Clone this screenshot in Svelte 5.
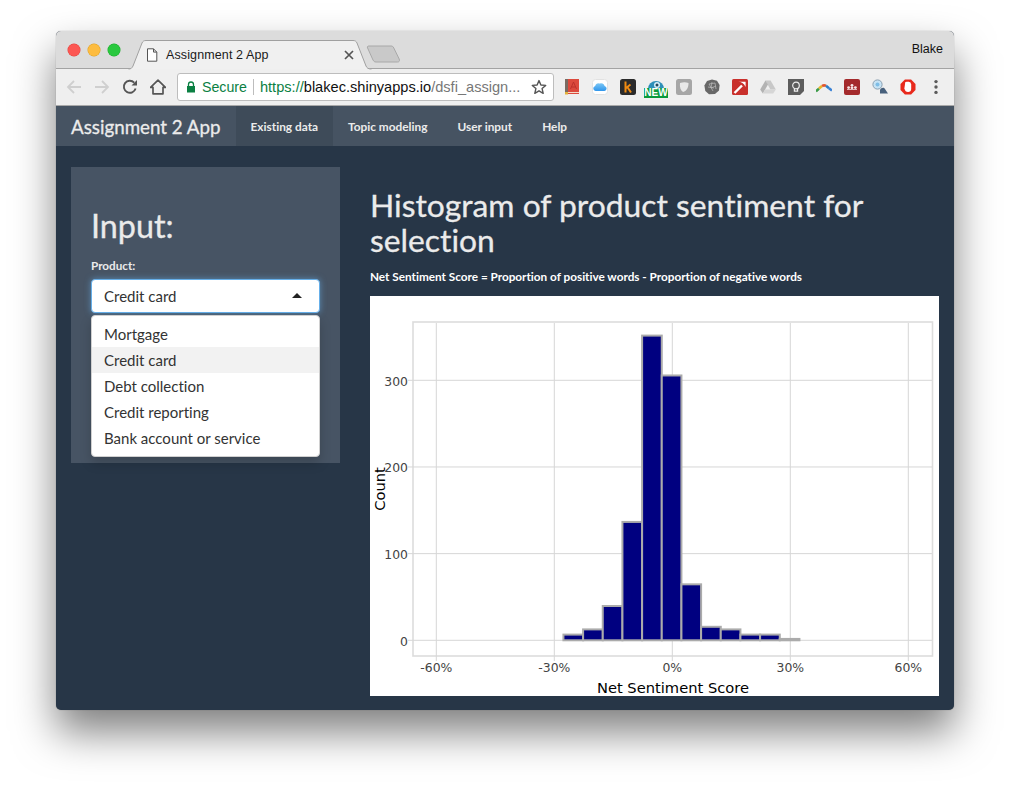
<script>
  const navItems = ['Existing data', 'Topic modeling', 'User input', 'Help'];
  const options = ['Mortgage', 'Credit card', 'Debt collection', 'Credit reporting', 'Bank account or service'];

  // Plot geometry, in the coordinates of the plot's own 569x400 box
  const zeroX = 302.3, zeroY = 344.3;
  const perPct = 118 / 30, perCount = 260 / 300;
  const xTicks = [-60, -30, 0, 30, 60];
  const yTicks = [0, 100, 200, 300];
  const counts = [6, 12, 39, 136, 351, 305, 64, 15, 12, 6, 6, 1];
  const bars = counts.map((c, i) => ({
    x: zeroX - 0.7 + (-27.5 + i * 5) * perPct,
    w: 5 * perPct,
    h: c * perCount
  }));
</script>

<div class="page">
<div class="window">
  <header class="titlebar">
    <div class="lights">
      <span class="light red"></span>
      <span class="light yellow"></span>
      <span class="light green"></span>
    </div>
    <div class="tab">
      <svg class="tab-shape" width="244" height="30" viewBox="0 0 244 30">
        <path d="M0.5 29 C3 29 4 28 5 26 L14 3 C14.8 1.2 16 0.5 18 0.5 L225 0.5 C227 0.5 228.2 1.2 229 3 L238 26 C239 28 240 29 243.5 29" fill="#f0f0f0" stroke="#a0a0a0" />
      </svg>
      <svg class="doc" width="12" height="14" viewBox="0 0 12 14">
        <path d="M1.5 .8 H7.5 L10.8 4.1 V13.2 H1.5 Z M7.5 .8 V4.1 H10.8" fill="#fff" stroke="#555" stroke-width="1" />
      </svg>
      <span class="tab-title">Assignment 2 App</span>
      <svg class="close" width="10" height="10" viewBox="0 0 10 10">
        <path d="M1 1 L9 9 M9 1 L1 9" stroke="#555" stroke-width="1.7" />
      </svg>
    </div>
    <svg class="newtab" width="36" height="18" viewBox="0 0 36 18">
      <path d="M3 1 H25 C26.5 1 27 1.4 27.8 3 L33.2 14 C34 16 33 17 31.5 17 H10 C8.5 17 7.8 16.4 7 15 L1.6 3 C1 1.6 1.6 1 3 1 Z" fill="#c9c9c9" stroke="#a8a8a8" />
    </svg>
    <span class="user">Blake</span>
  </header>

  <div class="toolbar">
    <svg class="ticon" width="16" height="16" viewBox="0 0 16 16"><path d="M15 8 H2 M8 2 L2 8 L8 14" fill="none" stroke="#cfcfcf" stroke-width="1.8" /></svg>
    <svg class="ticon" width="16" height="16" viewBox="0 0 16 16"><path d="M1 8 H14 M8 2 L14 8 L8 14" fill="none" stroke="#cfcfcf" stroke-width="1.8" /></svg>
    <svg class="ticon" width="16" height="16" viewBox="0 0 16 16"><path d="M13.6 9.5 A6 6 0 1 1 12.2 3.6" fill="none" stroke="#555" stroke-width="1.9" /><path d="M9.5 6.6 H15 V1 Z" fill="#555" /></svg>
    <svg class="ticon" width="16" height="16" viewBox="0 0 16 16"><path d="M8 1.2 L15.4 8.4 H13 V14.8 H3 V8.4 H.6 Z" fill="none" stroke="#555" stroke-width="1.7" stroke-linejoin="round" /></svg>

    <div class="omnibox">
      <svg class="lock" width="10" height="12" viewBox="0 0 10 12">
        <path d="M2.5 5 V3.5 A2.5 2.5 0 0 1 7.5 3.5 V5" fill="none" stroke="#0b8043" stroke-width="1.3" />
        <rect x="1" y="5" width="8" height="6.5" fill="#0b8043" />
      </svg>
      <span class="secure">Secure</span>
      <span class="divider"></span>
      <span class="url"><span class="scheme">https://</span><span class="host">blakec.shinyapps.io</span><span class="path">/dsfi_assign...</span></span>
      <svg class="star" width="16" height="16" viewBox="0 0 16 16">
        <path d="M8 1.6 L9.9 6 L14.7 6.4 L11.1 9.6 L12.2 14.3 L8 11.8 L3.8 14.3 L4.9 9.6 L1.3 6.4 L6.1 6 Z" fill="none" stroke="#555" stroke-width="1.4" stroke-linejoin="round" />
      </svg>
    </div>

    <div class="extensions">
      <svg width="16" height="16" viewBox="0 0 16 16"><rect x="1.5" y="0" width="13.5" height="15" fill="#dc4a3d" /><rect x="1" y="0" width="3" height="15" fill="#7b6b62" /><rect x="4" y="13" width="11" height="1" fill="#f4d9c8" /><rect x="1" y="13" width="3" height="2.5" fill="#e3b23c" /><path d="M6.5 10 L9.5 3 L12.5 10 M7.7 8 H11.3" fill="none" stroke="#b8302a" stroke-width=".9" /></svg>
      <svg width="16" height="16" viewBox="0 0 16 16"><defs><linearGradient id="cl" x1="0" y1="0" x2="0" y2="1"><stop offset="0" stop-color="#7cc7f5" /><stop offset="1" stop-color="#2f96ec" /></linearGradient></defs><rect x=".5" y=".5" width="15" height="15" rx="3" fill="#fff" stroke="#e2e2e2" /><path d="M3.6 12 A2.6 2.6 0 0 1 3.2 6.9 A3 3 0 0 1 7.4 4.6 A3.6 3.6 0 0 1 12.6 6.9 A2.6 2.6 0 0 1 12.4 12 Z" fill="url(#cl)" /></svg>
      <svg width="16" height="16" viewBox="0 0 16 16"><rect x="0" y="0" width="16" height="16" rx="2.5" fill="#2b2b2b" /><path d="M5.5 2.5 V13.5 M5.5 9.5 L10.5 5.5 M7.3 8 L11 13.5" fill="none" stroke="#ee8a12" stroke-width="2" /></svg>
      <div class="eye-icon">
        <svg width="16" height="16" viewBox="0 0 16 16"><path d="M0 10 A8 8 0 0 1 16 10 Z" fill="#2e8fb8" /><circle cx="9" cy="6" r="3" fill="#d5eef8" /><circle cx="9" cy="6" r="1.5" fill="#23465a" /></svg>
        <span class="new-badge">NEW</span>
      </div>
      <svg width="16" height="16" viewBox="0 0 16 16"><rect x="0" y="0" width="16" height="16" rx="2.5" fill="#a6a6a6" /><path d="M4 4 C7 3 10 3 12.5 4 C12.5 9 10.5 12 7 13 C4.5 11.5 3.5 8 4 4 Z" fill="#e9e9e9" /></svg>
      <svg width="16" height="16" viewBox="0 0 16 16"><path d="M8 .5 L13 1.8 L15.6 6 L15 11.5 L11 15 L5 15.3 L1.3 12 L.4 6.5 L3 2 Z" fill="#686868" /><path d="M5 5 L11 4 L12 10 M5 5 L9 12 M8 3 L7 9 L12 7 M4 8 L10 9" fill="none" stroke="#bdbdbd" stroke-width=".7" /></svg>
      <svg width="16" height="16" viewBox="0 0 16 16"><rect x="0" y="0" width="16" height="16" rx="1.5" fill="#c9302c" /><path d="M2.5 14 L10 6.5" stroke="#fff" stroke-width="2.4" /><path d="M5.5 2.8 C9 2.6 11.8 4 13.6 8 L13.6 2.8 Z" fill="#fff" /></svg>
      <svg width="16" height="16" viewBox="0 0 16 16"><path d="M5.4 1.5 H10.6 L15.8 10.5 H10.4 Z" fill="#c8c8c8" /><path d="M5.4 1.5 L.2 10.5 L2.8 14.5 L8 5.5 Z" fill="#b3b3b3" /><path d="M2.8 14.5 H13.2 L15.8 10.5 H5.2 Z" fill="#d6d6d6" /></svg>
      <svg width="16" height="16" viewBox="0 0 16 16"><path d="M0 0 H16 V12 L12 16 H0 Z" fill="#5d5d5d" /><circle cx="8" cy="6.5" r="3.3" fill="none" stroke="#eee" stroke-width="1.2" /><path d="M6.4 9.5 V12.2 H9.6 V9.5" fill="none" stroke="#eee" stroke-width="1.2" /></svg>
      <svg width="16" height="16" viewBox="0 0 16 16" fill="none" stroke-width="2.6"><path d="M0 12.4 L3 9.6" stroke="#3b9b48" /><path d="M3 9.6 L6 7" stroke="#e8b52a" /><path d="M6 7 Q8 5.8 10 6.8" stroke="#e0562f" /><path d="M10 6.8 L13 9.2" stroke="#2a7fc8" /><path d="M13 9.2 L16 11.6" stroke="#3a82d6" /></svg>
      <svg width="16" height="16" viewBox="0 0 16 16"><rect x="0" y="0" width="16" height="16" rx="2" fill="#a42a2c" /><circle cx="8" cy="6.3" r="1.4" fill="#f6e6e6" /><circle cx="4.6" cy="8.6" r="1.4" fill="#f6e6e6" /><circle cx="8" cy="8.8" r="1.4" fill="#f6e6e6" /><circle cx="11.4" cy="8.6" r="1.4" fill="#f6e6e6" /><path d="M3 10 H13 V10.8 H3 Z" fill="#f6e6e6" /></svg>
      <svg width="16" height="16" viewBox="0 0 16 16"><circle cx="5.5" cy="5.5" r="4.6" fill="#c6e3f5" stroke="#8a9fb0" stroke-width="1" /><circle cx="5.5" cy="5.5" r="2" fill="#7ebde6" /><path d="M8 11 C9 8.5 12 8 13 10 L16 14.5 L8 14.5 Z" fill="#47607c" /></svg>
      <svg width="16" height="16" viewBox="0 0 16 16"><path d="M4.9 .5 H11.1 L15.5 4.9 V11.1 L11.1 15.5 H4.9 L.5 11.1 V4.9 Z" fill="#e8291c" /><path d="M5 5 L5.3 3 L7 2.8 L8.8 2.8 L10.5 3.4 L11.2 5.5 V10 C11.2 12 10 13 8 13 C6 13 5 12 4.4 9.5 Z" fill="#fff" /></svg>
      <svg width="16" height="16" viewBox="0 0 16 16"><circle cx="8" cy="2.6" r="1.7" fill="#5b5b5b" /><circle cx="8" cy="8" r="1.7" fill="#5b5b5b" /><circle cx="8" cy="13.4" r="1.7" fill="#5b5b5b" /></svg>
    </div>
  </div>

  <nav class="navbar">
    <span class="brand">Assignment 2 App</span>
    <ul class="nav">
      {#each navItems as item, i}
        <li class:active={i === 0}>{item}</li>
      {/each}
    </ul>
  </nav>

  <div class="content">
    <aside class="well">
      <h2>Input:</h2>
      <div class="label">Product:</div>
      <div class="select">
        <div class="select-input">
          <span>Credit card</span>
          <span class="caret"></span>
        </div>
        <ul class="dropdown">
          {#each options as option, i}
            <li class:highlight={i === 1}>{option}</li>
          {/each}
        </ul>
      </div>
    </aside>

    <main class="main">
      <h2 class="title">Histogram of product sentiment for selection</h2>
      <div class="formula">Net Sentiment Score = Proportion of positive words - Proportion of negative words</div>
      <svg class="plot" width="569" height="400" viewBox="0 0 569 400">
        <rect x="43" y="26" width="519.5" height="334" fill="#fff" stroke="#dcdcdc" stroke-width="1.6" />
        {#each xTicks as t}
          {@const x = zeroX + t * perPct}
          <line class="grid" x1={x} x2={x} y1="27" y2="360" />
          <line class="tick" x1={x} x2={x} y1="360" y2="365" />
          <text class="ticklabel" {x} y="376" text-anchor="middle">{t}%</text>
        {/each}
        {#each yTicks as t}
          {@const y = zeroY - t * perCount}
          <line class="grid" x1="43" x2="562" y1={y} y2={y} />
          <line class="tick" x1="38" x2="43" y1={y} y2={y} />
          <text class="ticklabel" x="38" y={y + 5.5} text-anchor="end">{t}</text>
        {/each}
        {#each bars as b}
          <rect class="bar" x={b.x} y={zeroY - b.h - 0.5} width={b.w} height={b.h + 0.5} />
        {/each}
        <text class="axis" x="303" y="397" text-anchor="middle">Net Sentiment Score</text>
        <text class="axis" x="0" y="0" text-anchor="middle" transform="translate(15 193) rotate(-90)">Count</text>
      </svg>
    </main>
  </div>
</div>
</div>

<style>
  :global(body) {
    margin: 0;
    background: #fff;
  }

  .page {
    box-sizing: border-box;
    height: 790px;
    padding: 31px 0 0 56px;
  }

  .window {
    box-sizing: border-box;
    width: 898px;
    height: 679px;
    display: flex;
    flex-direction: column;
    border-radius: 5px;
    overflow: hidden;
    background: #273647;
    box-shadow: 0 22px 42px rgba(0, 0, 0, 0.5), 0 0 1px rgba(0, 0, 0, 0.45);
    font-family: "Liberation Sans", Arial, sans-serif;
  }

  /* title bar */
  .titlebar {
    box-sizing: border-box;
    height: 38px;
    flex: none;
    display: flex;
    align-items: center;
    padding: 0 11px 0 12px;
    background: #dcdcdc;
    border-bottom: 1px solid #a3a3a3;
  }
  .lights {
    display: flex;
    gap: 8px;
    margin-top: 1px;
    width: 60px;
    flex: none;
  }
  .light {
    width: 12px;
    height: 12px;
    border-radius: 50%;
  }
  .red { background: #fc5753; box-shadow: 0 0 0 .5px #e0443e; }
  .yellow { background: #fdbc40; box-shadow: 0 0 0 .5px #dea123; }
  .green { background: #2ac83f; box-shadow: 0 0 0 .5px #1aab29; }

  .tab {
    position: relative;
    align-self: flex-end;
    box-sizing: border-box;
    width: 244px;
    height: 29px;
    margin-bottom: -1px;
    flex: none;
    display: flex;
    align-items: center;
    padding-left: 18px;
  }
  .tab-shape {
    position: absolute;
    left: 0;
    top: 0;
  }
  .doc, .tab-title, .close {
    position: relative;
  }
  .doc { flex: none; }
  .tab-title {
    margin-left: 8px;
    font-size: 12.5px;
    letter-spacing: 0.12px;
    color: #1a1a1a;
    white-space: nowrap;
  }
  .close {
    margin-left: auto;
    margin-right: 18px;
    flex: none;
  }
  .newtab {
    margin: 9px 0 0 -6px;
    flex: none;
  }
  .user {
    margin-left: auto;
    margin-top: -1px;
    font-size: 12.5px;
    color: #111;
  }

  /* toolbar */
  .toolbar {
    box-sizing: border-box;
    height: 37px;
    flex: none;
    display: flex;
    align-items: center;
    gap: 12px;
    padding: 0 10px 1px;
    background: #efefef;
    border-bottom: 1px solid #a9a9a9;
  }
  .ticon { flex: none; }
  .omnibox {
    box-sizing: border-box;
    width: 377px;
    height: 28px;
    margin-left: -1px;
    flex: none;
    display: flex;
    align-items: center;
    padding: 0 6px 0 8px;
    background: #fff;
    border: 1px solid #bdbdbd;
    border-radius: 3px;
    font-size: 14.6px;
    white-space: nowrap;
  }
  .lock { flex: none; }
  .secure {
    margin-left: 6px;
    font-size: 14.2px;
    color: #0b8043;
  }
  .divider {
    width: 1px;
    height: 16px;
    margin: 0 6px;
    background: #bdbdbd;
  }
  .url { color: #777; }
  .scheme { color: #0b8043; }
  .host { color: #111; }
  .star {
    margin-left: auto;
    flex: none;
  }
  .extensions {
    display: flex;
    gap: 12px;
    margin-left: -2px;
    align-items: center;
  }
  .extensions svg {
    display: block;
    flex: none;
  }
  .eye-icon {
    position: relative;
    width: 16px;
    height: 16px;
  }
  .new-badge {
    position: absolute;
    left: -4px;
    top: 9px;
    width: 24px;
    height: 10px;
    background: #0a9a3c;
    color: #fff;
    font-size: 10px;
    font-weight: 700;
    line-height: 9.5px;
    text-align: center;
  }

  /* app navbar */
  .navbar {
    height: 40px;
    flex: none;
    display: flex;
    align-items: stretch;
    padding-left: 15px;
    background: #465362;
    font-family: Lato, sans-serif;
    font-variant-ligatures: none;
    color: #ebebeb;
  }
  .brand {
    align-self: center;
    font-size: 18.75px;
    white-space: nowrap;
    -webkit-text-stroke: 0.3px #ebebeb;
  }
  .nav {
    display: flex;
    margin: 0 0 0 15px;
    padding: 0;
    list-style: none;
  }
  .nav li {
    display: flex;
    align-items: center;
    padding: 0 15px;
    font-size: 11.85px;
    font-weight: 700;
  }
  .nav li.active {
    background: #3e4b59;
  }

  /* page */
  .content {
    flex: 1;
    display: flex;
    gap: 30px;
    align-items: flex-start;
    padding: 21px 15px 0;
    font-family: Lato, sans-serif;
    font-variant-ligatures: none;
    color: #ebebeb;
  }
  .well {
    box-sizing: border-box;
    width: 269px;
    height: 296px;
    flex: none;
    padding: 0 20px;
    background: #475464;
  }
  .well h2 {
    margin: 40px 0 0;
    font-size: 32.3px;
    font-weight: 400;
    line-height: 38px;
    -webkit-text-stroke: 0.3px #ebebeb;
  }
  .label {
    margin-top: 12px;
    font-size: 11.7px;
    font-weight: 700;
    line-height: 16px;
  }
  .select {
    position: relative;
    margin-top: 6px;
  }
  .select-input {
    box-sizing: border-box;
    height: 34px;
    display: flex;
    align-items: center;
    justify-content: space-between;
    padding: 0 17px 0 12px;
    background: #fff;
    border: 1px solid #66afe9;
    border-radius: 4px;
    box-shadow: 0 0 6px rgba(102, 175, 233, 0.6);
    color: #333;
    font-size: 15px;
  }
  .caret {
    width: 0;
    height: 0;
    margin-top: -2px;
    border-left: 5px solid transparent;
    border-right: 5px solid transparent;
    border-bottom: 5px solid #222;
  }
  .dropdown {
    position: absolute;
    left: 0;
    right: 0;
    top: 36px;
    margin: 0;
    padding: 5px 0;
    list-style: none;
    background: #fff;
    border: 1px solid #d0d0d0;
    border-radius: 4px;
    box-shadow: 0 6px 12px rgba(0, 0, 0, 0.18);
    color: #333;
    font-size: 15px;
  }
  .dropdown li {
    height: 26px;
    padding: 0 12px;
    line-height: 26px;
  }
  .dropdown li.highlight {
    background: #f2f2f2;
  }

  .main {
    width: 569px;
    flex: none;
  }
  .title {
    margin: 21px 0 0;
    font-size: 31.8px;
    font-weight: 400;
    line-height: 35px;
    -webkit-text-stroke: 0.3px #ebebeb;
  }
  .formula {
    margin-top: 11px;
    font-size: 11.75px;
    font-weight: 700;
    line-height: 16px;
    color: #fff;
    white-space: nowrap;
  }
  .plot {
    display: block;
    margin-top: 11px;
    background: #fff;
    font-family: "DejaVu Sans", sans-serif;
  }
  .grid {
    stroke: #d6d6d6;
    stroke-width: 1;
  }
  .tick {
    stroke: #d6d6d6;
    stroke-width: 1;
  }
  .ticklabel {
    font-size: 12.4px;
    fill: #444;
  }
  .axis {
    font-size: 14.7px;
    fill: #000;
  }
  .bar {
    fill: #000080;
    stroke: #ababab;
    stroke-width: 2;
  }
</style>
